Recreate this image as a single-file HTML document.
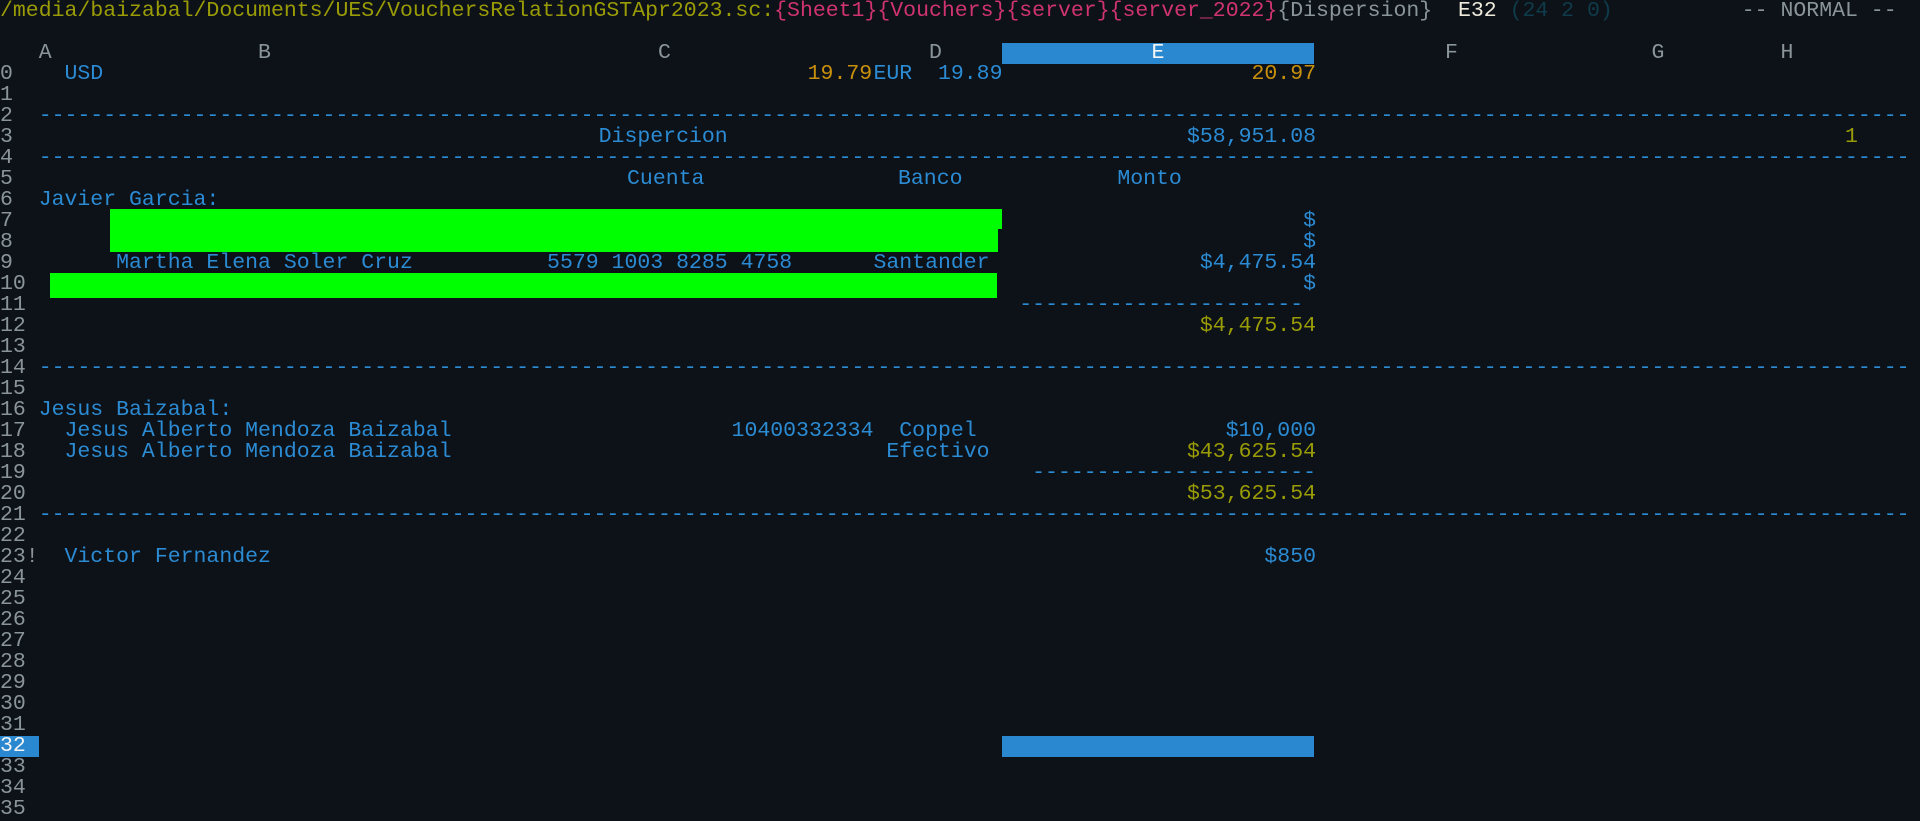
<!DOCTYPE html>
<html><head><meta charset="utf-8"><style>
html,body{margin:0;padding:0;background:#0d1118;width:1920px;height:817px;overflow:hidden}
body{font-family:"Liberation Mono","DejaVu Sans Mono",monospace;font-size:21.5px;color:#2b8bd3}
.l{position:absolute;left:0;height:21px;line-height:21px;width:1920px;white-space:pre}
.l span{position:absolute;top:0}
.g{color:#8a959b}.o{color:#c8900c}.ol{color:#9a9c06}.p{color:#d0346f}.w{color:#eeeadc}.t{color:#0f3c4a}
.hl{background:#2a88d0;color:#f4f4f4}
.bar{position:absolute;background:#00ff00}
</style></head><body>
<div class="l" style="top:1px"><span style="left:0"><span style="position:static" class="ol">/media/baizabal/Documents/UES/VouchersRelationGSTApr2023.sc:</span><span style="position:static" class="p">{Sheet1}{Vouchers}{server}{server_2022}</span><span style="position:static" class="g">{Dispersion}</span><span style="position:static" class="w">  E32</span><span style="position:static" class="t"> (24 2 0)</span></span><span class="g" style="left:135ch">-- NORMAL --</span></div>

<div class="l g" style="top:43px"><span style="left:3ch">A</span><span style="left:20ch">B</span><span style="left:51ch">C</span><span style="left:72ch">D</span><span class="hl" style="left:1002px;width:312px;text-align:center">E</span><span style="left:112ch">F</span><span style="left:128ch">G</span><span style="left:138ch">H</span></div>

<div class="l" style="top:64px"><span class="g" style="left:0">0</span><span style="left:5ch">USD</span><span class="o" style="left:62.6ch">19.79</span><span style="left:67.7ch">EUR</span><span style="left:72.7ch">19.89</span><span class="o" style="left:97ch">20.97</span></div>
<div class="l" style="top:85px"><span class="g" style="left:0">1</span></div>
<div class="l" style="top:106px"><span class="g" style="left:0">2</span><span style="left:3ch">-------------------------------------------------------------------------------------------------------------------------------------------------</span></div>
<div class="l" style="top:127px"><span class="g" style="left:0">3</span><span style="left:46.4ch">Dispercion</span><span style="left:92ch">$58,951.08</span><span class="ol" style="left:143ch">1</span></div>
<div class="l" style="top:148px"><span class="g" style="left:0">4</span><span style="left:3ch">-------------------------------------------------------------------------------------------------------------------------------------------------</span></div>
<div class="l" style="top:169px"><span class="g" style="left:0">5</span><span style="left:48.6ch">Cuenta</span><span style="left:69.6ch">Banco</span><span style="left:86.6ch">Monto</span></div>
<div class="l" style="top:190px"><span class="g" style="left:0">6</span><span style="left:3ch">Javier Garcia:</span></div>
<div class="l" style="top:211px"><span class="g" style="left:0">7</span><span style="left:101ch">$</span></div>
<div class="l" style="top:232px"><span class="g" style="left:0">8</span><span style="left:101ch">$</span></div>
<div class="l" style="top:253px"><span class="g" style="left:0">9</span><span style="left:9ch">Martha Elena Soler Cruz</span><span style="left:42.4ch">5579 1003 8285 4758</span><span style="left:67.7ch">Santander</span><span style="left:93ch">$4,475.54</span></div>
<div class="l" style="top:274px"><span class="g" style="left:0">10</span><span style="left:101ch">$</span></div>
<div class="l" style="top:295px"><span class="g" style="left:0">11</span><span style="left:79ch">----------------------</span></div>
<div class="l" style="top:316px"><span class="g" style="left:0">12</span><span class="ol" style="left:93ch">$4,475.54</span></div>
<div class="l" style="top:337px"><span class="g" style="left:0">13</span></div>
<div class="l" style="top:358px"><span class="g" style="left:0">14</span><span style="left:3ch">-------------------------------------------------------------------------------------------------------------------------------------------------</span></div>
<div class="l" style="top:379px"><span class="g" style="left:0">15</span></div>
<div class="l" style="top:400px"><span class="g" style="left:0">16</span><span style="left:3ch">Jesus Baizabal:</span></div>
<div class="l" style="top:421px"><span class="g" style="left:0">17</span><span style="left:5ch">Jesus Alberto Mendoza Baizabal</span><span style="left:56.7ch">10400332334</span><span style="left:69.7ch">Coppel</span><span style="left:95ch">$10,000</span></div>
<div class="l" style="top:442px"><span class="g" style="left:0">18</span><span style="left:5ch">Jesus Alberto Mendoza Baizabal</span><span style="left:68.7ch">Efectivo</span><span class="ol" style="left:92ch">$43,625.54</span></div>
<div class="l" style="top:463px"><span class="g" style="left:0">19</span><span style="left:80ch">----------------------</span></div>
<div class="l" style="top:484px"><span class="g" style="left:0">20</span><span class="ol" style="left:92ch">$53,625.54</span></div>
<div class="l" style="top:505px"><span class="g" style="left:0">21</span><span style="left:3ch">-------------------------------------------------------------------------------------------------------------------------------------------------</span></div>
<div class="l" style="top:526px"><span class="g" style="left:0">22</span></div>
<div class="l" style="top:547px"><span class="g" style="left:0">23!</span><span style="left:5ch">Victor Fernandez</span><span style="left:98ch">$850</span></div>
<div class="l" style="top:568px"><span class="g" style="left:0">24</span></div>
<div class="l" style="top:589px"><span class="g" style="left:0">25</span></div>
<div class="l" style="top:610px"><span class="g" style="left:0">26</span></div>
<div class="l" style="top:631px"><span class="g" style="left:0">27</span></div>
<div class="l" style="top:652px"><span class="g" style="left:0">28</span></div>
<div class="l" style="top:673px"><span class="g" style="left:0">29</span></div>
<div class="l" style="top:694px"><span class="g" style="left:0">30</span></div>
<div class="l" style="top:715px"><span class="g" style="left:0">31</span></div>
<div class="l" style="top:736px"><span class="hl" style="left:0;width:3ch">32</span><span class="hl" style="left:1002px;width:312px">&nbsp;</span></div>
<div class="l" style="top:757px"><span class="g" style="left:0">33</span></div>
<div class="l" style="top:778px"><span class="g" style="left:0">34</span></div>
<div class="l" style="top:799px"><span class="g" style="left:0">35</span></div>

<div class="bar" style="left:110px;top:209px;width:892px;height:20px"></div>
<div class="bar" style="left:110px;top:228px;width:888px;height:24px"></div>
<div class="bar" style="left:50px;top:273px;width:947px;height:25px"></div>
</body></html>
